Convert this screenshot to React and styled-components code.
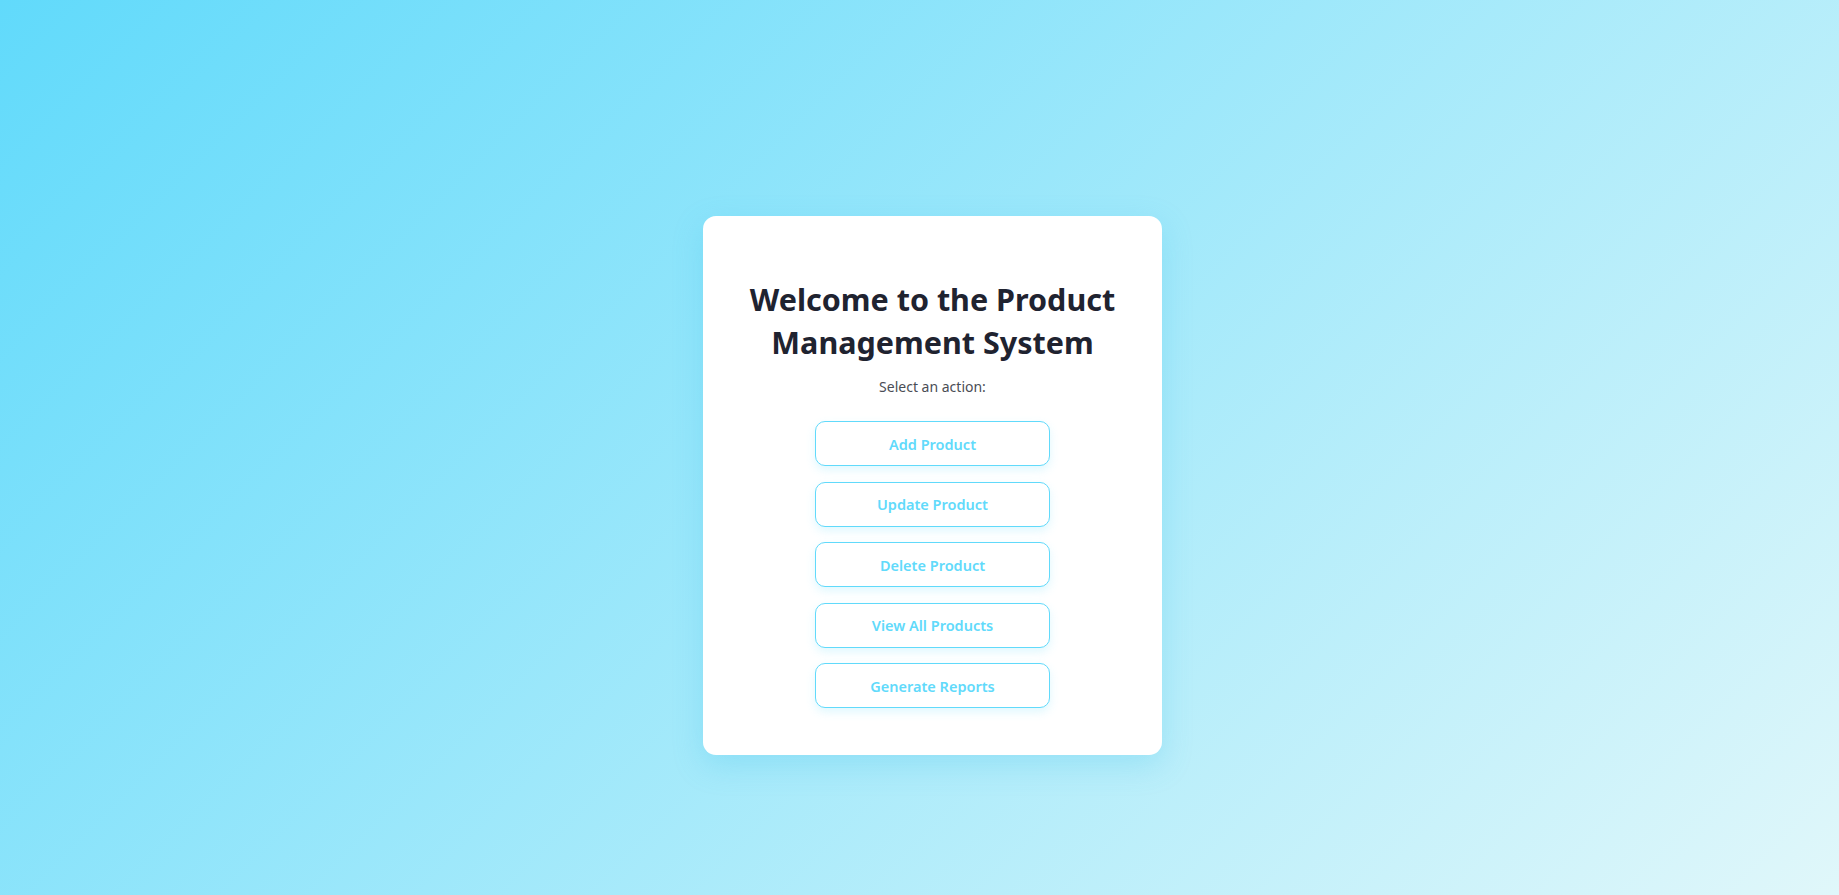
import styled, { createGlobalStyle } from "styled-components";

const GlobalStyle = createGlobalStyle`
  * {
    box-sizing: border-box;
  }

  body {
    margin: 0;
    font-family: "Segoe UI", "Noto Sans", "Open Sans", sans-serif;
    background: linear-gradient(135deg, #61dafb 0%, #e0f7fa 100%);
    min-height: 100vh;
  }
`;

const actions = [
  "Add Product",
  "Update Product",
  "Delete Product",
  "View All Products",
  "Generate Reports",
];

export default function App() {
  return (
    <>
      <GlobalStyle />
      <StyledPage>
        <StyledCard>
          <StyledHeadline>
            Welcome to the Product
            <br />
            Management System
          </StyledHeadline>
          <StyledSubtitle>Select an action:</StyledSubtitle>
          <StyledActions>
            {actions.map((action) => (
              <StyledButton key={action} type="button">
                {action}
              </StyledButton>
            ))}
          </StyledActions>
        </StyledCard>
      </StyledPage>
    </>
  );
}

const StyledPage = styled.main`
  display: flex;
  justify-content: center;
  align-items: center;
  min-height: 100vh;
  padding: 76px 0 0 26px;
`;

const StyledCard = styled.section`
  width: 459px;
  padding: 40px 40px 47px;
  background-color: #ffffff;
  border-radius: 13px;
  box-shadow: 0 10px 30px rgba(60, 190, 235, 0.25);
  text-align: center;
`;

const StyledHeadline = styled.h1`
  margin: 22px 0 0;
  font-size: 30.5px;
  line-height: 43px;
  font-weight: 700;
  color: #1f2330;
`;

const StyledSubtitle = styled.p`
  margin: 12px 0 24px;
  font-size: 14px;
  line-height: 21px;
  color: #4a4d55;
`;

const StyledActions = styled.div`
  display: flex;
  flex-direction: column;
  align-items: center;
  gap: 15.5px;
`;

const StyledButton = styled.button`
  width: 235px;
  height: 45px;
  padding: 0;
  font-family: inherit;
  font-size: 14.5px;
  font-weight: 600;
  color: #61dafb;
  background-color: #ffffff;
  border: 1px solid #61dafb;
  border-radius: 10px;
  box-shadow: 0 4px 10px rgba(97, 218, 251, 0.2);
  cursor: pointer;
`;
